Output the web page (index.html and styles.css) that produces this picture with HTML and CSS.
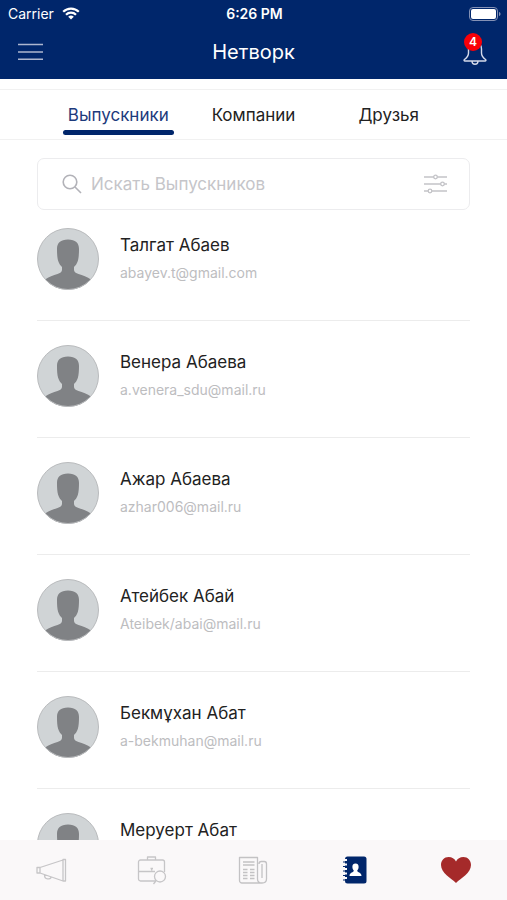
FILE: index.html
```html
<!DOCTYPE html>
<html lang="ru">
<head>
<meta charset="utf-8">
<meta name="viewport" content="width=device-width, initial-scale=1">
<title>Нетворк</title>
<link rel="stylesheet" href="styles.css">
</head>
<body>
<svg class="sprite" width="0" height="0" aria-hidden="true">
  <symbol id="person" viewBox="0 0 62 62">
    <circle cx="31" cy="31" r="30.5" fill="#d0d4d6"/>
    <path d="M31 11.500c-7.500 0-11 3.500-11 9.500 0 4 .2 9 1.200 12 .8 2.500 2.200 4.500 3.800 6v3c0 2-2 3-4.500 4-4 1.500-9 2.800-12.400 5.500a30.500 30.500 0 0 0 45.800 0c-3.400-2.700-8.400-4-12.400-5.500-2.500-1-4.500-2-4.500-4v-3c1.600-1.500 3-3.500 3.800-6 1-3 1.200-8 1.200-12 0-6-3.500-9.500-11-9.500z" fill="#808285"/>
    <circle cx="31" cy="31" r="30.500" fill="none" stroke="#b9bbbd"/>
  </symbol>
</svg>
<div class="app">
  <header class="header">
    <div class="status">
      <div class="carrier">
        <span>Carrier</span>
        <svg width="18" height="13" viewBox="0 0 18 13" fill="none" stroke="#fff" stroke-width="2.200">
          <path d="M1.200 4.800a11 11 0 0 1 15.600 0M4 7.800a7 7 0 0 1 10 0"/>
          <path d="M9 12.500L6.200 9.800a4 4 0 0 1 5.600 0z" fill="#fff" stroke="none"/>
        </svg>
      </div>
      <span class="clock">6:26 PM</span>
      <svg class="battery" width="32" height="14" viewBox="0 0 32 14">
        <rect x=".5" y=".5" width="28" height="13" rx="3.500" fill="none" stroke="#8491b5"/>
        <rect x="2" y="2" width="25" height="10" rx="2" fill="#fff"/>
        <path d="M30 5c2 .5 2 3.500 0 4z" fill="#8491b5"/>
      </svg>
    </div>
    <div class="titlebar">
      <button class="icon-button" aria-label="Меню">
        <svg width="26" height="18" viewBox="0 0 26 18" stroke="#adb6cf" stroke-width="1.500"><path d="M0 1.500h25M0 9h25M0 16.300h25"/></svg>
      </button>
      <h1 class="title">Нетворк</h1>
      <button class="icon-button bell" aria-label="Уведомления">
        <svg width="24" height="28" viewBox="0 0 24 28" fill="none" stroke="#d5daea" stroke-width="1.400" stroke-linejoin="round">
          <path d="M12 4c-4 0-6.500 3-6.500 7v4c0 3-1.200 4.500-4 6.500-.8.700-.5 1.500.5 1.500h20c1 0 1.300-.8.500-1.500-2.800-2-4-3.500-4-6.500v-4c0-4-2.500-7-6.500-7zM9 23.200a3 3 0 0 0 6 0"/>
        </svg>
        <span class="badge">4</span>
      </button>
    </div>
  </header>
  <nav class="tabs">
    <a class="tab active" href="#alumni">Выпускники</a>
    <a class="tab" href="#companies">Компании</a>
    <a class="tab" href="#friends">Друзья</a>
  </nav>
  <main class="content" id="alumni">
    <div class="search">
      <svg width="20" height="20" viewBox="0 0 20 20" fill="none" stroke="#b2b2b8" stroke-width="1.600"><circle cx="8" cy="8" r="6.800"/><path d="M13 13l6 6"/></svg>
      <input class="field" type="search" aria-label="Искать Выпускников" placeholder="Искать Выпускников">
      <button class="icon-button" aria-label="Фильтр">
        <svg width="23" height="20" viewBox="0 0 23 20" stroke="#c3c3c7" stroke-width="1.300" fill="#fff"><path d="M0 3h23M0 10h23M0 17h23"/><circle cx="11.500" cy="3" r="1.800"/><circle cx="18.500" cy="10" r="1.800"/><circle cx="6" cy="17" r="1.800"/></svg>
      </button>
    </div>
    <ul class="people">
      <li class="person"><svg class="avatar"><use href="#person"/></svg><div class="info"><h2 class="name">Талгат Абаев</h2><p class="mail">abayev.t@gmail.com</p></div></li>
      <li class="person"><svg class="avatar"><use href="#person"/></svg><div class="info"><h2 class="name">Венера Абаева</h2><p class="mail">a.venera_sdu@mail.ru</p></div></li>
      <li class="person"><svg class="avatar"><use href="#person"/></svg><div class="info"><h2 class="name">Ажар Абаева</h2><p class="mail">azhar006@mail.ru</p></div></li>
      <li class="person"><svg class="avatar"><use href="#person"/></svg><div class="info"><h2 class="name">Атейбек Абай</h2><p class="mail">Ateibek/abai@mail.ru</p></div></li>
      <li class="person"><svg class="avatar"><use href="#person"/></svg><div class="info"><h2 class="name">Бекмұхан Абат</h2><p class="mail">a-bekmuhan@mail.ru</p></div></li>
      <li class="person"><svg class="avatar"><use href="#person"/></svg><div class="info"><h2 class="name">Меруерт Абат</h2></div></li>
    </ul>
  </main>
  <nav class="bottom">
    <a class="item" href="#news" aria-label="Объявления">
      <svg width="32" height="30" viewBox="0 0 32 30" fill="none" stroke="#c6c5c7" stroke-width="1.300" stroke-linejoin="round"><path d="M2 12.500h3v5.500H2zM5 12.500L28 5v21L5 18M28 4.500h2.500v21.500H28zM9.500 19.800c0 3 1 4 3 4h1.500c1.500 0 2-1 2-2"/></svg>
    </a>
    <a class="item" href="#jobs" aria-label="Вакансии">
      <svg width="30" height="30" viewBox="0 0 30 30" fill="none" stroke="#c6c5c7" stroke-width="1.300" stroke-linejoin="round"><path d="M19 26H3.500a2 2 0 0 1-2-2V7a2 2 0 0 1 2-2h22a2 2 0 0 1 2 2v10M1.500 16.500H18M10.500 5V2h8v3M13.500 13.500h2.500M14.700 13.500v2"/><circle cx="23" cy="21.500" r="5.500"/><path d="M19.200 25.500L16.500 29"/></svg>
    </a>
    <a class="item" href="#press" aria-label="Новости">
      <svg width="30" height="30" viewBox="0 0 30 30" fill="none" stroke="#c3c2c4" stroke-width="1.300" stroke-linejoin="round"><path d="M24 28H4a2.500 2.500 0 0 1-2.500-2.500V2.500h18V24c0 3 2 4 4.500 4s4.500-1.500 4.500-4V9c0-1.500-.8-2.500-2.200-2.500h-3C21.500 6.500 21 8 21 9M24 9v14M5 7h11.500M5 10h11.500M5 14.500h4.500M5 17.500h4.500M5 20.500h4.500M5 23.500h4.500M12 14.500h4.500M12 17.500h4.500M12 20.500h4.500M12 23.500h4.500"/></svg>
    </a>
    <a class="item" href="#network" aria-label="Нетворк">
      <svg width="24" height="28" viewBox="0 0 24 28"><rect x="2" y=".5" width="21.500" height="27" rx="2.500" fill="#00266b"/><path d="M0 4h4M0 8.500h4M0 13h4M0 17.500h4M0 22h4" stroke="#faf8f9" stroke-width="2"/><path d="M0 6h5M0 10.500h5M0 15h5M0 19.500h5M0 24h5" stroke="#00266b"/><path d="M12.500 7.500c-2.300 0-3.300 1.500-3.100 3.700.2 1.800.8 2.400 1.400 3.300 0 2-4.300 1.800-4.300 5.500h12c0-3.700-4.300-3.500-4.300-5.500.6-.9 1.200-1.500 1.400-3.300.2-2.200-.8-3.700-3.100-3.700z" fill="#fff"/></svg>
    </a>
    <a class="item" href="#favorites" aria-label="Избранное">
      <svg width="32" height="28" viewBox="0 0 32 28"><path d="M16 27C11 22 1 17 1 9 1 4.500 4.300 1 8.600 1 12 1 14.500 2.700 16 5.500 17.500 2.700 20 1 23.400 1 27.700 1 31 4.500 31 9c0 8-10 13-15 18z" fill="#a52a2a"/></svg>
    </a>
  </nav>
</div>
</body>
</html>
```
FILE: styles.css
```css
* {
  box-sizing: border-box;
  margin: 0;
  padding: 0;
}

body {
  font-family: Inter, "Noto Sans", sans-serif;
  color: #222;
  background: #fff;
}

a {
  color: inherit;
  text-decoration: none;
}

svg {
  display: block;
}

.sprite {
  position: absolute;
}

.app {
  display: flex;
  flex-direction: column;
  height: 100vh;
}

.header {
  background: #00266b;
  color: #fff;
}

.status {
  display: grid;
  grid-template-columns: 1fr auto 1fr;
  align-items: center;
  height: 27px;
  padding: 0 6px 0 8px;
  font-size: 14px;
}

.carrier {
  display: flex;
  align-items: center;
  gap: 8px;
}

.clock {
  font-weight: 600;
}

.battery {
  justify-self: end;
}

.titlebar {
  display: flex;
  align-items: center;
  justify-content: space-between;
  height: 52px;
  padding: 0 20px 2px 18px;
}

.title {
  font-size: 20px;
  font-weight: 400;
}

.icon-button {
  display: block;
  border: 0;
  background: none;
}

.bell {
  position: relative;
}

.badge {
  position: absolute;
  top: -5px;
  left: 1px;
  width: 18px;
  height: 18px;
  border-radius: 50%;
  background: #f90008;
  color: #fff;
  font: 600 12px/18px Inter, sans-serif;
  text-align: center;
}

.tabs {
  display: grid;
  grid-template-columns: repeat(3, 1fr);
  justify-items: center;
  height: 51px;
  margin-top: 10px;
  padding: 0 10%;
  border-top: 1px solid #f1f1f1;
  border-bottom: 1px solid #f1f1f1;
}

.tab {
  padding: 14px 5px 0;
  font-size: 17px;
  line-height: 22px;
}

.active {
  color: #1d3a7c;
}

.active::after {
  content: "";
  display: block;
  height: 5px;
  margin: 4px -5px 0;
  border-radius: 3px;
  background: #00266b;
}

.content {
  flex: 1;
  min-height: 0;
  overflow: hidden;
  padding: 18px 37px 0;
}

.search {
  display: flex;
  align-items: center;
  gap: 9px;
  height: 52px;
  padding: 0 22px 0 24px;
  border: 1px solid #ececee;
  border-radius: 7px;
}

.field {
  flex: 1;
  min-width: 0;
  border: 0;
  outline: 0;
  background: none;
  font: 17px/22px Inter, "Noto Sans", sans-serif;
}

.field::placeholder {
  color: #c5c5c9;
}

.people {
  display: grid;
  gap: 24px;
  padding-top: 18px;
  list-style: none;
}

.person {
  display: flex;
  gap: 21px;
  padding-bottom: 30px;
  border-bottom: 1px solid #ececec;
}

.avatar {
  flex: none;
  width: 62px;
  height: 62px;
}

.info {
  padding-top: 5px;
}

.name {
  font-size: 17px;
  line-height: 24px;
  font-weight: 400;
}

.mail {
  margin-top: 6px;
  color: #bdbdbf;
  font-size: 14px;
  line-height: 20px;
}

.bottom {
  display: grid;
  grid-template-columns: repeat(5, 1fr);
  height: 60px;
  background: #faf8f9;
}

.item {
  display: flex;
  align-items: center;
  justify-content: center;
}
```
